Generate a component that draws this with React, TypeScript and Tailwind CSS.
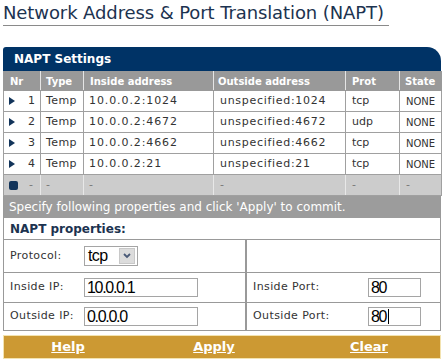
import React from 'react';

const rows = [
  { nr: 1, inside: '10.0.0.2:1024', outside: 'unspecified:1024', prot: 'tcp' },
  { nr: 2, inside: '10.0.0.2:4672', outside: 'unspecified:4672', prot: 'udp' },
  { nr: 3, inside: '10.0.0.2:4662', outside: 'unspecified:4662', prot: 'tcp' },
  { nr: 4, inside: '10.0.0.2:21', outside: 'unspecified:21', prot: 'tcp' },
];

const Arrow = () => (
  <svg width="6" height="8" viewBox="0 0 6 8" className="shrink-0">
    <path d="M0 0 L6 4 L0 8 Z" fill="#12345a" />
  </svg>
);

const TextBox = ({ value, w, caret }: { value: string; w: string; caret?: boolean }) => (
  <div
    className={`${w} h-[19px] border border-[#a5a5a5] bg-white flex items-center pl-[2px] text-[16px] leading-none text-black tracking-[-1.3px]`}
    style={{ fontFamily: '"Liberation Sans", Arial, sans-serif' }}
  >
    {value}
    {caret && <span className="inline-block w-px h-[15px] bg-black ml-[2px]" />}
  </div>
);

export default function App() {
  const verdana = { fontFamily: '"DejaVu Sans", Verdana, sans-serif' };
  return (
    <div className="w-[445px] h-[362px] bg-white overflow-hidden" style={verdana}>
      {/* Title */}
      <div className="px-[3px] pt-[3px]">
        <h1 className="text-[18px] leading-[20px] text-[#1c3350] font-normal tracking-[-0.1px] whitespace-nowrap">
          Network Address &amp; Port Translation (NAPT)
        </h1>
        <div className="mt-[2px] w-[386px] h-px bg-[#8a8a8a]" />
      </div>

      <div className="mx-[3px] mt-[21px] w-[438px]">
        {/* Settings header */}
        <div className="h-[24px] bg-[#003366] rounded-tl-[3px] rounded-tr-[14px] flex items-center pl-[11px] text-white font-bold text-[12px]">
          NAPT Settings
        </div>

        {/* Settings table */}
        <table className="table-fixed border-collapse w-[438px] text-[11px] text-[#333]">
          <colgroup>
            <col className="w-[37px]" />
            <col className="w-[43px]" />
            <col className="w-[130px]" />
            <col className="w-[132px]" />
            <col className="w-[54px]" />
            <col className="w-[42px]" />
          </colgroup>
          <thead>
            <tr className="h-[19px] bg-[#999999] text-white text-[10px]">
              <th className="text-left pl-[6px] border border-[#999] border-r-[#e5e5e5] font-bold">Nr</th>
              <th className="text-left pl-[5px] border border-[#999] border-r-[#e5e5e5] font-bold">Type</th>
              <th className="text-left pl-[6px] border border-[#999] border-r-[#e5e5e5] font-bold">Inside address</th>
              <th className="text-left pl-[4px] border border-[#999] border-r-[#e5e5e5] font-bold">Outside address</th>
              <th className="text-left pl-[6px] border border-[#999] border-r-[#e5e5e5] font-bold">Prot</th>
              <th className="text-left pl-[5px] border border-[#999] font-bold">State</th>
            </tr>
          </thead>
          <tbody>
            {rows.map((r) => (
              <tr key={r.nr} className="h-[21px] bg-white">
                <td className="border border-[#a0a0a0] px-[5px]">
                  <div className="flex items-center justify-between">
                    <Arrow />
                    <span>{r.nr}</span>
                  </div>
                </td>
                <td className="border border-[#a0a0a0] pl-[5px] tracking-[0.4px]">Temp</td>
                <td className="border border-[#a0a0a0] pl-[5px] tracking-[0.9px]">{r.inside}</td>
                <td className="border border-[#a0a0a0] pl-[6px] tracking-[0.7px]">{r.outside}</td>
                <td className="border border-[#a0a0a0] pl-[6px]">{r.prot}</td>
                <td className="border border-[#a0a0a0] pl-[6px] text-[10px]">NONE</td>
              </tr>
            ))}
            <tr className="h-[21px] bg-[#cccccc] text-[#777]">
              <td className="border border-[#a0a0a0] border-r-[#e8e8e8] px-[5px]">
                <div className="flex items-center gap-[11px]">
                  <span className="inline-block w-[9px] h-[9px] rounded-[2px] bg-[#12345a]" />
                  <span>-</span>
                </div>
              </td>
              <td className="border border-[#a0a0a0] border-r-[#e8e8e8] pl-[5px]">-</td>
              <td className="border border-[#a0a0a0] border-r-[#e8e8e8] pl-[5px]">-</td>
              <td className="border border-[#a0a0a0] border-r-[#e8e8e8] pl-[6px]">-</td>
              <td className="border border-[#a0a0a0] border-r-[#e8e8e8] pl-[6px]">-</td>
              <td className="border border-[#a0a0a0] pl-[6px]">-</td>
            </tr>
          </tbody>
        </table>

        {/* Hint bar */}
        <div className="h-[22px] bg-[#9c9c9c] border-x border-[#999] flex items-center pl-[5px] text-white text-[12px]">
          Specify following properties and click 'Apply' to commit.
        </div>

        {/* Properties */}
        <div className="border-x border-b border-[#999] text-[11px] text-[#333] tracking-[0.4px]">
          <div className="h-[22px] border-b border-[#999] flex items-center pl-[6px] text-[12px] font-bold text-[#1c3350] tracking-normal">
            NAPT properties:
          </div>
          <div className="grid grid-cols-[243px_1fr]">
            {/* Protocol row */}
            <div className="h-[33px] border-b border-r-2 border-[#999] flex items-center pl-[6px]">
              <span className="w-[74px]">Protocol:</span>
              <div
                className="w-[54px] h-[20px] border border-[#a5a5a5] bg-white flex items-center justify-between pl-[3px] pr-[2px] text-[16px] text-black tracking-[-0.6px]"
                style={{ fontFamily: '"Liberation Sans", Arial, sans-serif' }}
              >
                <span className="leading-none">tcp</span>
                <span className="w-[16px] h-[16px] bg-[#dcdcdc] border border-[#c8c8c8] flex items-center justify-center">
                  <svg width="8" height="6" viewBox="0 0 8 6">
                    <path d="M1 1 L4 4 L7 1" stroke="#4a5a78" strokeWidth="1.8" fill="none" />
                  </svg>
                </span>
              </div>
            </div>
            <div className="h-[33px] border-b border-[#999]" />

            {/* Inside row */}
            <div className="h-[30px] border-b border-r-2 border-[#999] flex items-center pl-[6px]">
              <span className="w-[74px]">Inside IP:</span>
              <TextBox value="10.0.0.1" w="w-[114px]" />
            </div>
            <div className="h-[30px] border-b border-[#999] flex items-center pl-[6px]">
              <span className="w-[115px]">Inside Port:</span>
              <TextBox value="80" w="w-[53px]" />
            </div>

            {/* Outside row */}
            <div className="h-[27px] border-r-2 border-[#999] flex items-center pl-[6px]">
              <span className="w-[74px]">Outside IP:</span>
              <TextBox value="0.0.0.0" w="w-[114px]" />
            </div>
            <div className="h-[27px] flex items-center pl-[6px]">
              <span className="w-[115px]">Outside Port:</span>
              <TextBox value="80" w="w-[53px]" caret />
            </div>
          </div>
        </div>

        {/* Footer actions */}
        <div className="mt-[4px] h-[24px] bg-[#cc9933] border border-[#f3e3b0] grid grid-cols-[128px_164px_146px] items-center text-center text-[13px] font-bold text-white">
          <a className="underline">Help</a>
          <a className="underline">Apply</a>
          <a className="underline">Clear</a>
        </div>
      </div>
    </div>
  );
}
